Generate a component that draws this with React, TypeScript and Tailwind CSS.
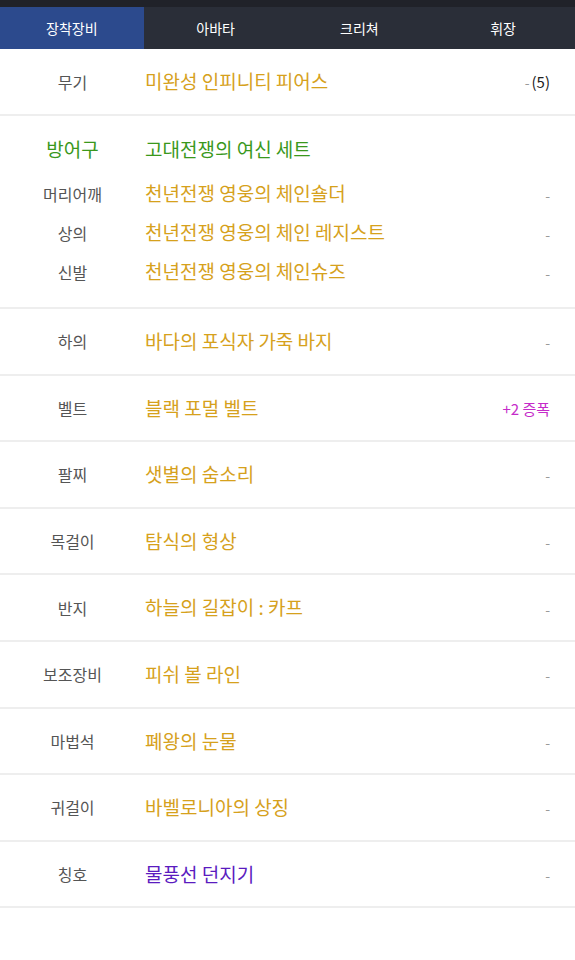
import React from 'react';

type Row = { label: string; name: string; color: string; extra?: React.ReactNode };

const GOLD = 'text-[#d6a11c]';
const GREEN = 'text-[#3a981c]';
const PURPLE = 'text-[#5a1bbf]';

const dash = <span className="text-[#9a9a9a] text-[14px]">-</span>;

const rows: Row[] = [
  { label: '하의', name: '바다의 포식자 가죽 바지', color: GOLD },
  { label: '벨트', name: '블랙 포멀 벨트', color: GOLD, extra: <span className="text-[#c52bc9] text-[15px]">+2 증폭</span> },
  { label: '팔찌', name: '샛별의 숨소리', color: GOLD },
  { label: '목걸이', name: '탐식의 형상', color: GOLD },
  { label: '반지', name: '하늘의 길잡이 : 카프', color: GOLD },
  { label: '보조장비', name: '피쉬 볼 라인', color: GOLD },
  { label: '마법석', name: '폐왕의 눈물', color: GOLD },
  { label: '귀걸이', name: '바벨로니아의 상징', color: GOLD },
  { label: '칭호', name: '물풍선 던지기', color: PURPLE },
];

const tabs = ['장착장비', '아바타', '크리쳐', '휘장'];

function ItemLine({ label, name, color, extra }: Row) {
  return (
    <div className="flex items-center h-full">
      <div className="w-[145px] text-center text-[16px] text-[#555]">{label}</div>
      <div className={`flex-1 text-[19px] ${color}`}>{name}</div>
      <div className="pr-[25px]">{extra ?? dash}</div>
    </div>
  );
}

export default function App() {
  return (
    <main className="min-h-screen w-[575px] bg-white" style={{ fontFamily: '"Noto Sans CJK KR", "Noto Sans", sans-serif' }}>
      <div className="h-[7px] bg-[#202229]" />
      <nav className="grid grid-cols-4 h-[42px] bg-[#2a2e38]">
        {tabs.map((t, i) => (
          <div
            key={t}
            className={`flex items-center justify-center text-[14px] text-white ${i === 0 ? 'bg-[#2c4a8d]' : ''}`}
          >
            {t}
          </div>
        ))}
      </nav>

      {/* weapon */}
      <div className="h-[67px] border-b-2 border-[#eeeeee]">
        <ItemLine
          label="무기"
          name="미완성 인피니티 피어스"
          color={GOLD}
          extra={
            <span className="text-[15px] text-[#222]">
              <span className="text-[#9a9a9a] text-[14px] mr-[2px]">-</span>(5)
            </span>
          }
        />
      </div>

      {/* armor set */}
      <div className="pt-[14px] pb-[16px] border-b-2 border-[#eeeeee]">
        <div className="flex items-center h-[39px]">
          <div className={`w-[145px] text-center text-[19px] ${GREEN}`}>방어구</div>
          <div className={`flex-1 text-[19px] ${GREEN}`}>고대전쟁의 여신 세트</div>
        </div>
        <div className="mt-[5px]">
          <div className="h-[39px]">
            <ItemLine label="머리어깨" name="천년전쟁 영웅의 체인숄더" color={GOLD} />
          </div>
          <div className="h-[39px]">
            <ItemLine label="상의" name="천년전쟁 영웅의 체인 레지스트" color={GOLD} />
          </div>
          <div className="h-[39px]">
            <ItemLine label="신발" name="천년전쟁 영웅의 체인슈즈" color={GOLD} />
          </div>
        </div>
      </div>

      {rows.map((r) => (
        <div key={r.label} className="h-[66.6px] border-b-2 border-[#eeeeee]">
          <ItemLine {...r} />
        </div>
      ))}
    </main>
  );
}
